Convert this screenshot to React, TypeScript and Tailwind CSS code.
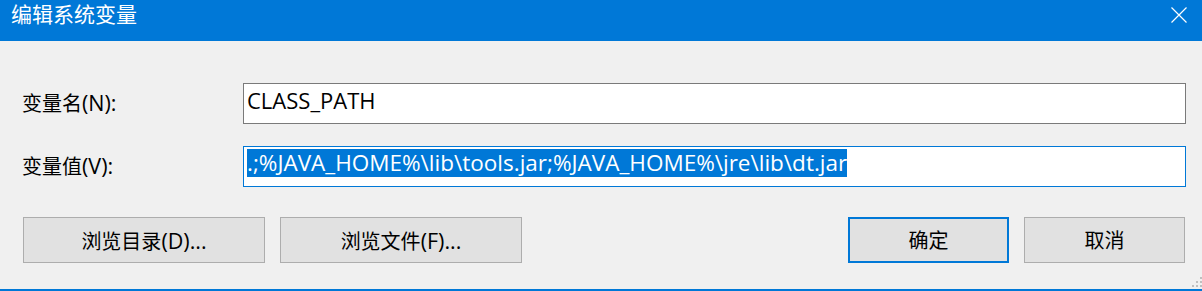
import React from "react"

const valueText = ".;%JAVA_HOME%\\lib\\tools.jar;%JAVA_HOME%\\jre\\lib\\dt.jar"

// CJK runs render at 20px, Latin runs a bit larger like the Windows UI font does
function Mixed({ text }: { text: string }) {
  const parts = text.split(/([\u4e00-\u9fff]+)/).filter(Boolean)
  return (
    <>
      {parts.map((p, i) =>
        /[\u4e00-\u9fff]/.test(p) ? (
          <span key={i} className="text-[20px]">
            {p}
          </span>
        ) : (
          <span key={i} className="text-[21.5px]">
            {p}
          </span>
        )
      )}
    </>
  )
}

function CloseIcon() {
  return (
    <svg width="16" height="16" viewBox="0 0 16 16" className="block">
      <path d="M0.5 0.5 L15.5 15.5 M15.5 0.5 L0.5 15.5" stroke="#ffffff" strokeWidth="1.2" fill="none" />
    </svg>
  )
}

function Grip() {
  const dots = [
    [8, 0],
    [8, 4],
    [4, 4],
    [8, 8],
    [4, 8],
    [0, 8],
  ]
  return (
    <svg width="10" height="10" viewBox="0 0 10 10" className="absolute right-0 bottom-[4px]">
      {dots.map(([x, y]) => (
        <rect key={`${x}-${y}`} x={x} y={y} width="2" height="2" fill="#bfbfbf" />
      ))}
    </svg>
  )
}

function Button({ label, primary, className }: { label: string; primary?: boolean; className?: string }) {
  return (
    <div
      className={`flex h-[46px] items-center justify-center bg-[#e1e1e1] leading-[28px] text-black ${
        primary ? "border-2 border-[#0078d7]" : "border border-[#adadad]"
      } ${className ?? ""}`}
    >
      <span className="-mb-[3px]">
        <Mixed text={label} />
      </span>
    </div>
  )
}

export default function App() {
  return (
    <div className="relative flex h-[291px] w-[1202px] flex-col overflow-hidden bg-[#f0f0f0] font-['Open_Sans','Noto_Sans_CJK_SC',sans-serif] text-black">
      <div className="flex h-[41px] shrink-0 items-start justify-between bg-[#0078d7]">
        <span className="pl-[11px] pt-[3px] text-[21px] leading-[22px] text-white">编辑系统变量</span>
        <div className="mr-[15px] mt-[7px]">
          <CloseIcon />
        </div>
      </div>

      <div className="flex flex-col pl-[22px] pr-[16px]">
        <div className="mt-[42px] flex items-center">
          <span className="w-[221px] leading-[28px]">
            <Mixed text="变量名(N):" />
          </span>
          <div className="h-[41px] flex-1 border border-[#7a7a7a] bg-white px-[3px] pt-[2px]">
            <span className="block text-[22px] leading-[28px]">CLASS_PATH</span>
          </div>
        </div>
        <div className="mt-[22px] flex items-center">
          <span className="w-[221px] leading-[28px]">
            <Mixed text="变量值(V):" />
          </span>
          <div className="h-[41px] flex-1 border border-[#0078d7] bg-white px-[3px] pt-[2px]">
            <span className="inline-block bg-[#0078d7] text-[22.5px] leading-[28px] whitespace-pre text-white">{valueText}</span>
          </div>
        </div>
        <div className="ml-[1px] mr-[1px] mt-[30px] flex">
          <Button label="浏览目录(D)..." className="w-[242px]" />
          <Button label="浏览文件(F)..." className="ml-[15px] w-[242px]" />
          <div className="flex-1" />
          <Button label="确定" primary className="w-[161px]" />
          <Button label="取消" className="ml-[15px] w-[161px]" />
        </div>
      </div>

      <div className="mt-[26px] h-[2px] shrink-0 bg-[#0078d7]" />
      <Grip />
    </div>
  )
}
